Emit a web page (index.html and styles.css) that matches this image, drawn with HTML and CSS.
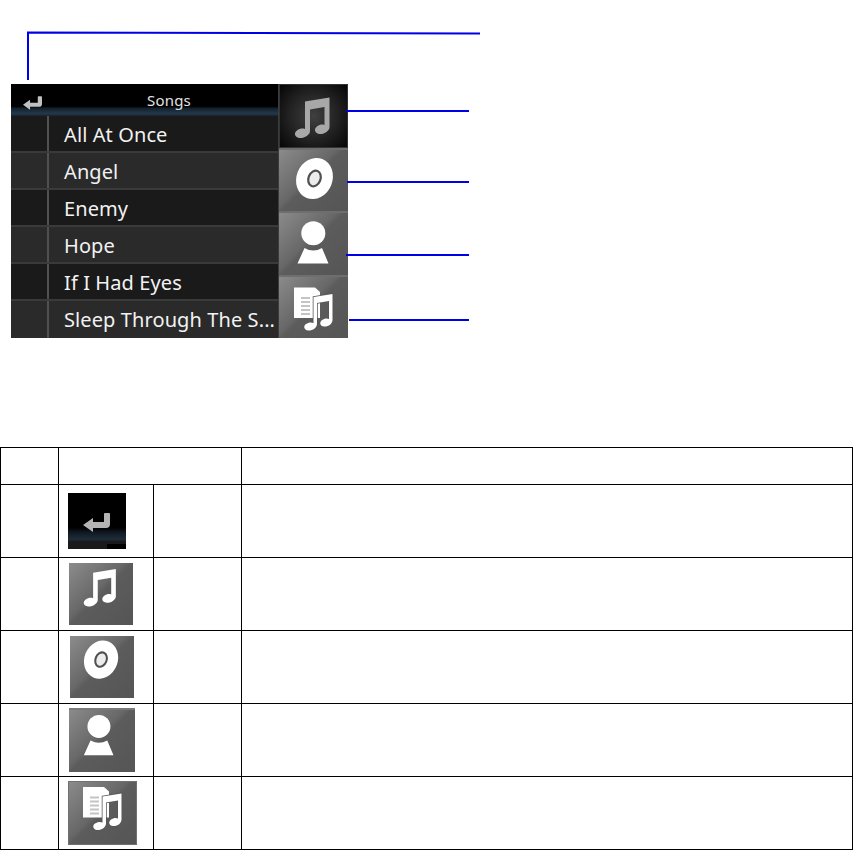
FILE: index.html
```html
<!DOCTYPE html>
<html lang="en">
<head>
    <meta charset="UTF-8">
    <meta name="viewport" content="width=device-width, initial-scale=1.0">
    <title>Songs screen</title>
    <link rel="stylesheet" href="styles.css">
</head>
<body>
    <svg class="glyphs" aria-hidden="true">
        <symbol id="g-back" viewBox="0 0 27 19">
            <path d="M0 12 L10 5 V9 H21 V1 Q21 0 22 0 H26 Q27 0 27 1 V11 Q27 15 23 15 H10 V19 Z"/>
        </symbol>
        <symbol id="g-note" viewBox="0 0 69 63">
            <path d="M26 17.500 L50.500 13.500 V43 C50.500 47 45 50.500 40.500 50 C35.500 49.500 34.500 45 38 42.500 C40.500 40.500 43.500 40 45.500 41 V23 L31 25.500 V47 C31 51 25 54.500 20.500 54 C15.500 53.500 14.500 49 18 46.500 C20.500 44.500 23.500 44 26 45 Z"/>
        </symbol>
        <symbol id="g-disc" viewBox="0 0 69 63">
            <ellipse cx="35.500" cy="30.500" rx="18" ry="21" transform="rotate(22 35.500 30.500)" fill="#fff"/>
            <ellipse cx="35.500" cy="30.500" rx="6" ry="8" transform="rotate(22 35.500 30.500)" fill="#ececec" stroke="#505050" stroke-width="2.200"/>
        </symbol>
        <symbol id="g-artist" viewBox="0 0 69 63">
            <circle cx="34.300" cy="22.300" r="12" fill="#fff"/>
            <path d="M25.500 37 Q34.300 42 43 37 L49.500 52.500 H18.500 Z" fill="#fff"/>
        </symbol>
        <symbol id="g-list" viewBox="0 0 69 63">
            <path d="M15 12.500 H36 L41 17 V43 H15 Z" fill="#fff"/>
            <path d="M22 23 H31 M22 27 H31 M22 31 H31 M22 35 H31 M22 39 H31" stroke="#c4c4c4" stroke-width="2"/>
            <path d="M34.500 22 L53.500 19 V45 C53.500 49 49 52 45 51.500 C41 51 40 47.500 43 45 C45 43.500 48 43 50 44 V26 L38 28 V49 C38 53 33 56 29 55.500 C25 55 24 51 27 49 C29 47.500 32 47 34.500 48 Z" fill="#fff" stroke="#565656" stroke-width="1.500" paint-order="stroke"/>
        </symbol>
    </svg>

    <div class="figure">
        <div class="device">
            <div class="list">
                <div class="list-head">
                    <span class="back-slot"><svg class="back-glyph"><use href="#g-back"/></svg></span>
                    <span class="list-title">Songs</span>
                </div>
                <div class="song"><span class="song-mark"></span><span class="song-name">All At Once</span></div>
                <div class="song"><span class="song-mark"></span><span class="song-name">Angel</span></div>
                <div class="song"><span class="song-mark"></span><span class="song-name">Enemy</span></div>
                <div class="song"><span class="song-mark"></span><span class="song-name">Hope</span></div>
                <div class="song"><span class="song-mark"></span><span class="song-name">If I Had Eyes</span></div>
                <div class="song"><span class="song-mark"></span><span class="song-name">Sleep Through The S...</span></div>
            </div>
            <div class="tabs">
                <div class="tab tab-active"><svg class="glyph"><use href="#g-note"/></svg></div>
                <div class="tab"><svg class="glyph"><use href="#g-disc"/></svg></div>
                <div class="tab"><svg class="glyph"><use href="#g-artist"/></svg></div>
                <div class="tab"><svg class="glyph"><use href="#g-list"/></svg></div>
            </div>
        </div>

        <!-- callout lines sit over the screenshot -->
        <svg class="callouts" width="853" height="447">
            <path d="M28 80 V32.500 L480 33.500" />
            <path d="M346 111 H469" />
            <path d="M347 182 H469" />
            <path d="M346 255 H469" />
            <path d="M349 320 H469" />
        </svg>
    </div>

    <table class="keys">
        <colgroup>
            <col class="col-no">
            <col class="col-icon">
            <col class="col-name">
            <col class="col-desc">
        </colgroup>
        <tr class="keys-head">
            <td></td>
            <td colspan="2"></td>
            <td></td>
        </tr>
        <tr>
            <td></td>
            <td class="thumb-cell"><div class="thumb thumb-back"><svg class="thumb-arrow"><use href="#g-back"/></svg></div></td>
            <td></td>
            <td></td>
        </tr>
        <tr>
            <td></td>
            <td class="thumb-cell"><div class="thumb thumb-note"><svg class="glyph" viewBox="0 9 69 63"><use href="#g-note" width="69" height="63"/></svg></div></td>
            <td></td>
            <td></td>
        </tr>
        <tr>
            <td></td>
            <td class="thumb-cell"><div class="thumb thumb-disc"><svg class="glyph" viewBox="2 7 69 63"><use href="#g-disc" width="69" height="63"/></svg></div></td>
            <td></td>
            <td></td>
        </tr>
        <tr>
            <td></td>
            <td class="thumb-cell"><div class="thumb thumb-artist"><svg class="glyph" viewBox="3 5 69 63"><use href="#g-artist" width="69" height="63"/></svg></div></td>
            <td></td>
            <td></td>
        </tr>
        <tr>
            <td></td>
            <td class="thumb-cell"><div class="thumb thumb-list"><svg class="glyph" viewBox="0 7 69 63"><use href="#g-list" width="69" height="63"/></svg></div></td>
            <td></td>
            <td></td>
        </tr>
    </table>
</body>
</html>
```

FILE: styles.css
```css
* {
    margin: 0;
    padding: 0;
    box-sizing: border-box;
}

body {
    background: white;
    font-family: "Noto Sans", "Liberation Sans", sans-serif;
}

.glyphs {
    position: absolute;
    width: 0;
    height: 0;
}

.figure {
    position: relative;
    height: 447px;
    padding: 84px 0 0 11px;
}

.callouts {
    position: absolute;
    top: 0;
    left: 0;
    fill: none;
    stroke: #0000e6;
    stroke-width: 2;
}

.device {
    display: flex;
    width: 337px;
    height: 254px;
    background: #000;
}

/* song list */
.list {
    width: 267px;
    display: flex;
    flex-direction: column;
}

.list-head {
    display: flex;
    align-items: center;
    height: 32px;
    background: linear-gradient(180deg, #000 0, #000 70%, #14202b 76%, #22384b 92%, #1a2530 100%);
}

.back-slot {
    width: 49px;
    padding: 6px 0 0 12px;
    display: flex;
}

.back-glyph {
    width: 19px;
    height: 14px;
    fill: #c0c0c0;
}

.list-title {
    flex: 1;
    text-align: center;
    color: #e2e2e2;
    font-size: 15px;
    letter-spacing: 0.2px;
}

.song {
    display: flex;
    height: 37px;
    background: #1a1a1a;
    border-bottom: 2px solid #3a3a3a;
}

.song:nth-child(odd) {
    background: #2a2a2a;
}

.song:last-child {
    border-bottom: none;
}

.song-mark {
    width: 38px;
    border-right: 2px solid #505050;
}

.song-name {
    padding: 1px 0 0 15px;
    line-height: 35px;
    color: #f2f2f2;
    font-size: 20px;
    letter-spacing: 0.1px;
    white-space: nowrap;
}

/* right hand tabs */
.tabs {
    width: 70px;
    display: flex;
    flex-direction: column;
}

.tab {
    flex: 1;
    border-left: 1px solid #3c3c3c;
    background: linear-gradient(135deg, #8c8c8c 0, #686868 44%, #5c5c5c 50%, #555 100%);
    box-shadow: inset 0 2px 0 #6e6e6e;
}

.tab-active {
    background: radial-gradient(circle, #404040 0, #1e1e1e 58%, #030303 100%);
    box-shadow: inset 0 0 0 1px #333;
}

.glyph {
    display: block;
    width: 69px;
    height: 63px;
    fill: #fff;
    filter: blur(0.4px);
}

.tab-active .glyph {
    fill: #a8a8a8;
    filter: blur(0.7px);
}

/* key table */
.keys {
    table-layout: fixed;
    width: 852px;
    border-collapse: collapse;
}

.col-no { width: 58px; }
.col-icon { width: 95px; }
.col-name { width: 88px; }
.col-desc { width: 611px; }

.keys td {
    height: 73px;
    border: 1px solid #000;
    vertical-align: top;
}

.keys .keys-head td {
    height: 37px;
}

.thumb {
    background: linear-gradient(135deg, #8c8c8c 0, #686868 44%, #5c5c5c 50%, #555 100%);
}

.thumb .glyph {
    width: 100%;
    height: 100%;
}

.thumb-back {
    display: flex;
    width: 58px;
    height: 56px;
    margin: 8px 0 0 9px;
    padding: 20px 0 0 15px;
    background:
        linear-gradient(#000, #000) right bottom / 19px 5px no-repeat,
        linear-gradient(180deg, #000 0, #000 62%, #101820 70%, #1c2c3a 82%, #1c2630 85%, #1a1a1a 86%, #1a1a1a 100%);
}

.thumb-arrow {
    width: 27px;
    height: 19px;
    fill: #b4b4b4;
    filter: blur(0.4px);
}

.thumb-note {
    width: 64px;
    height: 62px;
    margin: 5px 0 0 10px;
}

.thumb-disc {
    width: 64px;
    height: 62px;
    margin: 5px 0 0 11px;
}

.thumb-artist {
    width: 66px;
    height: 64px;
    margin: 4px 0 0 10px;
    box-shadow: inset 0 2px 0 #7a7a7a;
}

.thumb-list {
    width: 69px;
    height: 64px;
    margin: 4px 0 0 9px;
    box-shadow: inset 0 0 0 1px #707070;
}
```
